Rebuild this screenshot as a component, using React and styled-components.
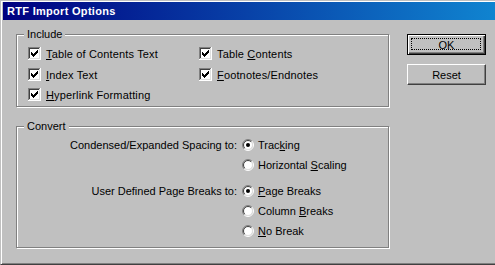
import React from "react";
import styled, { createGlobalStyle } from "styled-components";

const Global = createGlobalStyle`
  html, body { margin: 0; padding: 0; background: #c0c0c0; }
  body { font-family: "Liberation Sans", Arial, sans-serif; font-size: 11px; color: #000; }
`;

const Window = styled.div`
  width: 495px;
  height: 265px;
  box-sizing: border-box;
  background: #c0c0c0;
  border-top: 1px solid #c0c0c0;
  border-left: 1px solid #c0c0c0;
  border-bottom: 1px solid #404040;
  box-shadow: inset 1px 1px 0 #fff, inset 0 -1px 0 #808080;
  padding: 1px 0 0 2px;
  display: flex;
  flex-direction: column;
  overflow: hidden;
`;

const TitleBar = styled.div`
  height: 18px;
  background: linear-gradient(to right, #000080, #1084d0);
  color: #fff;
  font-weight: bold;
  font-size: 11px;
  display: flex;
  align-items: center;
  padding-left: 4px;
  letter-spacing: 0.3px;
`;

const Content = styled.div`
  display: flex;
  padding: 14px 0 0 13px;
`;

const LeftCol = styled.div`
  display: flex;
  flex-direction: column;
  gap: 19px;
`;

const RightCol = styled.div`
  display: flex;
  flex-direction: column;
  gap: 9px;
  margin-left: 18px;
`;

const Group = styled.div`
  position: relative;
  box-sizing: border-box;
  width: 373px;
  height: ${(p) => p.$h}px;
  border: 1px solid #808080;
  box-shadow: inset 1px 1px 0 #fff, 1px 1px 0 #fff;
  padding: ${(p) => p.$pad};
`;

const Legend = styled.span`
  position: absolute;
  left: 7px;
  top: -7px;
  padding: 0 3px 0 3px;
  background: #c0c0c0;
  line-height: 13px;
`;

const CheckGrid = styled.div`
  display: grid;
  grid-template-columns: 171px auto;
  grid-template-rows: 21px 20px 20px;
`;

const Item = styled.label`
  display: flex;
  align-items: center;
  gap: 5px;
  white-space: nowrap;
  height: 13px;
  letter-spacing: 0.15px;
`;

const Box = styled.span`
  width: ${(p) => p.$size || 13}px;
  height: ${(p) => p.$size || 13}px;
  flex: none;
  display: block;
`;

const U = styled.span`
  text-decoration: underline;
  text-underline-offset: 1px;
`;

const ConvertGrid = styled.div`
  display: grid;
  grid-template-columns: 220px auto;
  column-gap: 5px;
`;

const Section = styled.div`
  display: contents;
`;

const RowLabel = styled.div`
  grid-column: 1;
  height: 20px;
  display: flex;
  align-items: center;
  justify-content: flex-end;
  white-space: nowrap;
  margin-top: ${(p) => p.$mt || 0}px;
`;

const RadioItem = styled.label`
  grid-column: 2;
  height: 20px;
  display: flex;
  align-items: center;
  gap: 4px;
  white-space: nowrap;
  margin-top: ${(p) => p.$mt || 0}px;
`;

const Button = styled.div`
  box-sizing: border-box;
  width: 79px;
  height: 21px;
  display: flex;
  align-items: center;
  justify-content: center;
  position: relative;
  background: #c0c0c0;
  ${(p) =>
    p.$default
      ? `border: 1px solid #000;
         box-shadow: inset 1px 1px 0 #fff, inset -1px -1px 0 #404040, inset -2px -2px 0 #808080;`
      : `border: 1px solid;
         border-color: #fff #404040 #404040 #fff;
         box-shadow: inset -1px -1px 0 #808080;`}
`;

const Focus = styled.span`
  position: absolute;
  left: 3px;
  top: 3px;
  right: 4px;
  bottom: 4px;
  border: 1px dotted #000;
`;

const CheckIcon = () => (
  <svg width="13" height="13" viewBox="0 0 13 13" shapeRendering="crispEdges">
    <rect x="0" y="0" width="12" height="1" fill="#808080" />
    <rect x="0" y="0" width="1" height="12" fill="#808080" />
    <rect x="1" y="1" width="10" height="1" fill="#404040" />
    <rect x="1" y="1" width="1" height="10" fill="#404040" />
    <rect x="0" y="12" width="13" height="1" fill="#fff" />
    <rect x="12" y="0" width="1" height="13" fill="#fff" />
    <rect x="1" y="11" width="11" height="1" fill="#dfdfdf" />
    <rect x="11" y="1" width="1" height="11" fill="#dfdfdf" />
    <rect x="2" y="2" width="9" height="9" fill="#fff" />
    <path
      d="M9 3h1v1h-1z M8 4h2v1h-2z M3 5h1v1h-1z M7 5h3v1h-3z M3 6h2v1h-2z M6 6h3v1h-3z M3 7h5v1h-5z M4 8h3v1h-3z M5 9h1v1h-1z"
      fill="#000"
    />
  </svg>
);

const arc = (r, first) => {
  const d = r / Math.SQRT2;
  const a = `${6 - d} ${6 + d}`;
  const b = `${6 + d} ${6 - d}`;
  return first ? `M${a} A${r} ${r} 0 0 1 ${b}` : `M${b} A${r} ${r} 0 0 1 ${a}`;
};

const RadioIcon = ({ on }) => (
  <svg width="12" height="12" viewBox="0 0 12 12">
    <circle cx="6" cy="6" r="4.5" fill="#fff" />
    <path d={arc(5.5, true)} stroke="#808080" strokeWidth="1" fill="none" />
    <path d={arc(5.5, false)} stroke="#fff" strokeWidth="1" fill="none" />
    <path d={arc(4.5, true)} stroke="#404040" strokeWidth="1" fill="none" />
    <path d={arc(4.5, false)} stroke="#dfdfdf" strokeWidth="1" fill="none" />
    {on && <circle cx="6" cy="6" r="2" fill="#000" />}
  </svg>
);

const Check = ({ children }) => (
  <Item>
    <Box>
      <CheckIcon />
    </Box>
    <span>{children}</span>
  </Item>
);

const Radio = ({ on, mt, children }) => (
  <RadioItem $mt={mt}>
    <Box $size={12}>
      <RadioIcon on={on} />
    </Box>
    <span>{children}</span>
  </RadioItem>
);

export default function App() {
  return (
    <>
      <Global />
      <Window>
        <TitleBar>RTF Import Options</TitleBar>
        <Content>
          <LeftCol>
            <Group $h={73} $pad="12px 0 0 11px">
              <Legend>Include</Legend>
              <CheckGrid>
                <Check>
                  <U>T</U>able of Contents Text
                </Check>
                <Check>
                  Table <U>C</U>ontents
                </Check>
                <Check>
                  <U>I</U>ndex Text
                </Check>
                <Check>
                  <U>F</U>ootnotes/Endnotes
                </Check>
                <Check>
                  <U>H</U>yperlink Formatting
                </Check>
              </CheckGrid>
            </Group>
            <Group $h={122} $pad="8px 0 0 0">
              <Legend>Convert</Legend>
              <ConvertGrid>
                <Section>
                  <RowLabel>Condensed/Expanded Spacing to:</RowLabel>
                  <Radio on>
                    Trac<U>k</U>ing
                  </Radio>
                  <Radio>
                    Horizontal <U>S</U>caling
                  </Radio>
                </Section>
                <Section>
                  <RowLabel $mt={6}>User Defined Page Breaks to:</RowLabel>
                  <Radio on mt={6}>
                    <U>P</U>age Breaks
                  </Radio>
                  <Radio>
                    Column <U>B</U>reaks
                  </Radio>
                  <Radio>
                    <U>N</U>o Break
                  </Radio>
                </Section>
              </ConvertGrid>
            </Group>
          </LeftCol>
          <RightCol>
            <Button $default>
              <Focus />
              OK
            </Button>
            <Button>Reset</Button>
          </RightCol>
        </Content>
      </Window>
    </>
  );
}
